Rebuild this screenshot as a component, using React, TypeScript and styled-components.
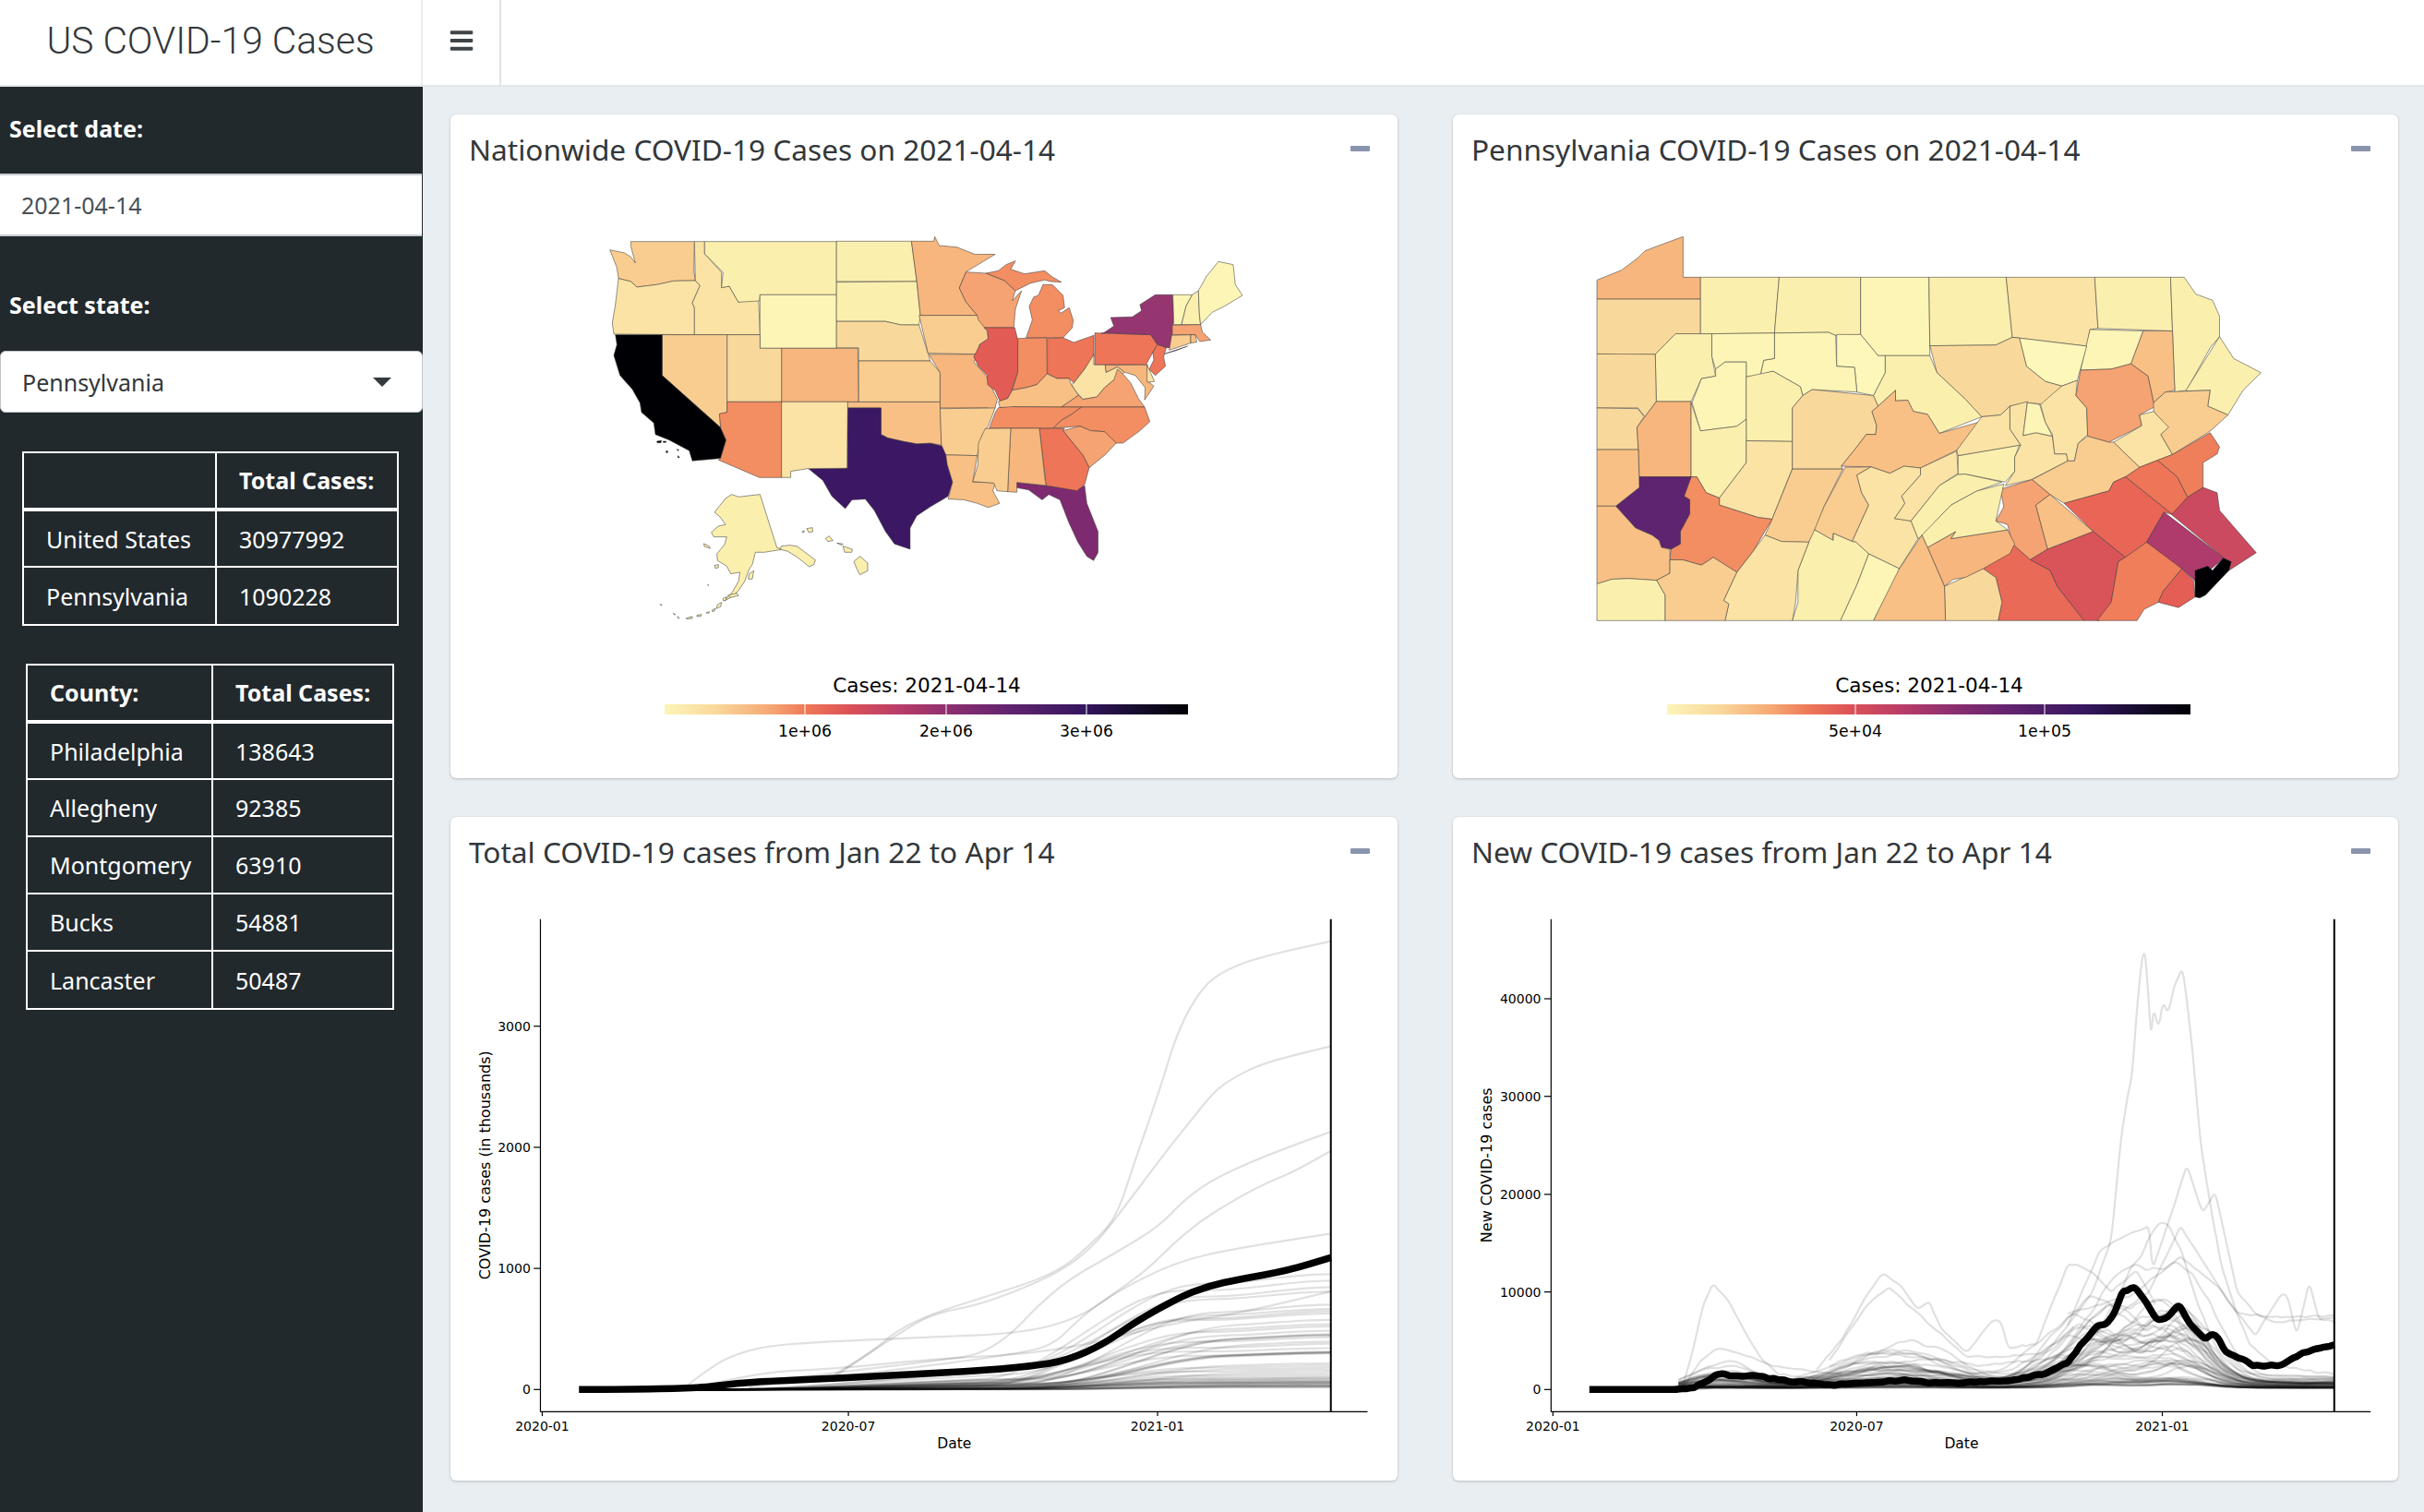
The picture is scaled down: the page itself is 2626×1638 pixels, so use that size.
import styled, { createGlobalStyle } from "styled-components";
import { FaBars } from "react-icons/fa";

const Y0 = "#fcf5b6";
const Y1 = "#fbefae";
const Y2 = "#fae3a4";
const Y3 = "#f9d99b";
const O0 = "#f9cd90";
const O1 = "#f8c085";
const O2 = "#f7b67d";
const O3 = "#f5a373";
const O4 = "#f38e62";
const O5 = "#ee7557";
const BLACK = "#000004";

type Shape = [string, string];

// traced from crops of the picture at 3x, this moves them into the 1568 x 1568 map box
const fromCrop = (ox: number, oy: number, shapes: Shape[]): Shape[] =>
  shapes.map(([fill, points]) => [
    fill,
    points
      .split(" ")
      .map((p) => {
        const [x, y] = p.split(",").map(Number);
        const u = (ox + x / 3 - 620) * 2.063;
        const v = (oy + y / 3 - 220) * 2.613;
        return `${u.toFixed(1)},${v.toFixed(1)}`;
      })
      .join(" "),
  ]);

const usCentral: Shape[] = [
  [Y1, "590,108 758,108 770,222 590,222"],
  [Y1, "590,224 770,222 778,318 775,345 735,345 700,335 590,335"],
  [Y3, "590,335 700,335 735,345 775,345 795,425 800,447 640,447 640,410 590,410"],
  [O0, "640,447 800,447 822,480 822,563 640,563"],
  [O1, "615,563 822,563 825,685 800,680 770,682 740,675 705,665 690,655 690,580 615,580"],
  ["#3c1763", "615,580 690,580 690,655 705,665 740,675 770,682 800,680 835,690 838,740 850,790 840,830 800,860 770,885 755,920 755,980 720,965 700,930 675,870 655,838 625,840 610,865 580,830 560,785 528,752 615,750"],
  [O2, "758,108 808,108 810,95 820,120 860,125 900,145 945,145 880,195 865,240 880,280 905,318 778,318 770,222"],
  [O0, "775,318 905,318 925,350 930,385 910,400 905,428 795,425 785,370"],
  [O2, "797,428 905,428 898,450 925,490 950,555 945,580 925,600 930,580 822,580 822,480"],
  [O0, "822,582 945,580 930,630 915,660 905,715 835,713 825,685"],
  [O1, "835,713 905,715 895,790 945,792 940,815 955,850 930,862 905,850 875,840 840,838 850,790 838,740"],
  ["#7e2a70", "990,790 1057,800 1128,812 1145,800 1150,850 1175,930 1175,990 1165,1012 1150,1000 1130,960 1110,905 1090,840 1065,825 1050,840 1020,812 990,805"],
];

const usEast: Shape[] = [
  [O3, "-10,164 55,168 115,192 150,225 140,258 170,225 150,285 145,345 50,345 30,320 26,305 -10,262 -32,216"],
  [O4, "55,168 95,160 120,140 150,128 135,155 180,170 245,160 270,180 300,197 265,195 245,190 200,200 170,215 150,225 115,192"],
  [O4, "185,378 205,320 195,275 210,245 225,240 240,205 270,205 305,240 310,280 290,290 298,298 325,280 338,320 335,345 305,378"],
  ["#e25c55", "48,345 148,345 158,385 158,490 135,560 125,575 100,585 85,550 60,530 58,500 30,470 15,440 35,400 62,380 60,355"],
  [O4, "158,380 252,378 253,495 220,530 185,540 140,548 158,490"],
  [O5, "254,380 305,378 340,393 405,370 405,440 375,480 340,525 325,510 285,510 254,495"],
  [Y2, "405,432 405,465 442,465 445,490 482,472 505,490 470,515 440,540 415,570 370,578 345,550 332,530 340,525 375,480"],
  [O1, "100,605 95,585 125,575 140,548 185,540 220,530 253,495 285,510 325,510 332,530 345,550 355,565 300,603 140,602 138,605"],
  [O3, "300,603 355,565 370,578 415,570 440,540 470,515 482,480 495,490 525,525 550,575 570,603"],
  [O2, "442,467 578,465 582,520 600,535 570,580 572,540 540,500 505,490 482,472 445,490"],
  [Y2, "578,465 602,520 578,522"],
  [O5, "408,362 590,368 612,400 597,425 575,465 408,465"],
  ["#963670", "432,365 470,340 460,312 530,310 560,290 555,270 605,238 662,238 665,310 655,410 640,410 612,400 590,368 430,362"],
  ["#7e2a70", "635,430 710,405 670,420"],
  [O5, "612,400 640,410 632,440 638,470 605,500 585,480 600,450 597,425"],
  [Y0, "662,238 725,238 705,275 690,335 665,335"],
  [Y1, "725,238 745,225 748,300 752,335 690,335 705,275"],
  [Y0, "745,225 770,180 810,130 858,140 865,205 888,240 830,275 790,295 752,335 748,300"],
  [O3, "660,337 752,335 758,360 785,385 750,390 735,368 660,368"],
  [O0, "658,370 720,368 720,395 650,418"],
  [O1, "720,368 735,368 740,392 720,395"],
  [O4, "365,603 570,603 587,650 555,680 500,720 475,720 440,683 395,680 360,665 272,672 300,645 330,628"],
  [O4, "140,602 300,603 365,603 330,628 300,645 272,672 65,672 85,620 95,605"],
  [O3, "305,680 360,665 395,680 440,683 478,720 440,760 390,800 370,760"],
  [O5, "228,673 310,672 305,680 370,760 390,800 375,855 350,875 250,858"],
  [O2, "135,672 228,672 247,842 250,858 155,848 155,880 125,878"],
  [O0, "52,673 135,672 125,878 90,875 80,850 12,845 28,790 30,720"],
];

const usWest: Shape[] = [
  [O0, "100,35 307,35 305,130 310,162 240,163 185,175 120,183 100,165 60,155 55,120 32,62 80,72 100,85 115,105 100,50"],
  [Y2, "60,155 100,165 120,183 185,175 240,163 310,162 325,178 300,235 307,250 307,338 45,336 40,300 50,240"],
  [Y2, "307,35 340,35 340,75 395,135 395,185 420,180 450,232 515,212 520,338 307,338 307,250 300,235 325,178 310,162"],
  [Y1, "340,35 768,35 768,208 520,208 518,228 450,232 420,180 395,185 400,135 340,75"],
  [Y0, "520,208 768,208 768,382 520,382"],
  [O2, "590,382 838,382 840,556 590,556"],
  [Y3, "413,338 520,338 520,382 590,382 590,556 413,556"],
  [O0, "202,338 413,338 413,590 390,595 392,640 202,470"],
  [BLACK, "50,338 202,338 202,470 392,640 410,680 392,740 300,748 290,715 225,680 180,662 175,625 135,590 130,560 105,515 65,470 45,405 55,370"],
  [BLACK, "185,684 200,682 198,689 186,689"],
  [BLACK, "205,684 215,684 214,688 206,688"],
  [BLACK, "215,716 220,716 220,721 215,721"],
  [BLACK, "250,710 256,712 254,716"],
  [BLACK, "252,731 259,736 254,738"],
  [O4, "413,556 590,556 590,802 518,802 385,745 392,740 410,680 392,640 388,595 413,590"],
  [Y2, "590,556 805,556 803,772 675,773 620,782 620,802 590,802"],
];

const usAlaska: Shape[] = [
  [Y1, "278,47 300,55 370,47 425,220 445,225 385,235 355,235 345,275 335,290 320,330 300,360 285,375 270,385 255,392 280,365 300,330 305,300 275,305 262,280 232,262 230,240 255,210 262,185 220,185 212,170 235,150 258,145 240,120 222,105 258,60"],
  [Y1, "465,212 490,215 550,260 545,275 530,282 490,250 460,232 435,225 440,215"],
  [Y1, "265,375 295,368 300,376 275,382"],
  [Y1, "250,385 262,380 258,392 250,392"],
  [Y1, "232,405 245,398 242,412 228,418"],
  [Y1, "215,422 225,418 222,426 215,428"],
  [Y1, "195,432 205,428 204,433"],
  [Y1, "165,440 180,437 178,443 165,444"],
  [Y1, "130,449 150,444 150,450 132,452"],
  [Y1, "45,404 50,405 50,409"],
  [Y1, "88,433 95,437 92,439"],
  [Y1, "102,443 108,449 104,450"],
  [Y1, "200,340 203,341 202,344"],
  [Y1, "187,207 205,215 208,222 190,217"],
  [Y1, "222,278 235,275 235,285 225,287"],
  [Y1, "335,305 350,295 345,322 332,322"],
  [Y1, "675,265 695,248 720,270 720,295 695,308 685,290"],
  [Y1, "620,205 640,208 636,212"],
  [Y1, "640,215 670,225 668,235 645,235"],
  [Y1, "583,190 595,182 607,197 590,200"],
  [Y1, "522,158 540,155 542,168 528,170"],
  [Y1, "507,168 515,165 510,172"],
];

const usStates: Shape[] = [
  ...usCentral,
  ...fromCrop(1050, 240, usEast),
  ...fromCrop(650, 250, usWest),
  ...fromCrop(700, 520, usAlaska),
];

const paCounties: Shape[] = [
  [O2, "98,218 150,190 185,155 200,135 240,115 281,95 281,210 318,210 318,272 98,272"],
  [Y3, "98,272 318,272 318,370 265,370 222,428 150,430 98,427"],
  [Y1, "318,210 485,210 475,368 342,370 318,370"],
  [Y1, "485,210 658,210 658,372 605,375 590,366 475,368"],
  [Y0, "658,210 803,210 805,432 695,432 658,372"],
  [Y1, "803,210 967,210 980,380 945,402 805,404"],
  [Y2, "967,210 1155,210 1162,355 1145,358 1138,405 980,380"],
  [Y1, "1155,210 1316,210 1320,362 1162,355"],
  [Y1, "1316,210 1345,210 1370,258 1405,275 1420,320 1420,378 1400,410 1350,530 1325,535"],
  [Y1, "1420,378 1450,440 1508,480 1470,530 1438,600 1395,575 1400,530 1348,532"],
  [Y0, "1145,358 1258,362 1232,455 1190,470 1125,473"],
  [O1, "1258,362 1320,362 1325,530 1305,535 1280,565 1268,490 1232,455"],
  ["#fdf7ba", "995,382 1138,405 1118,502 1085,518 1050,505 1010,462"],
  [Y3, "805,404 945,402 980,380 995,382 1010,462 1050,505 1085,518 1050,570 1010,565 975,575 955,600 915,605 880,555 820,480"],
  [Y1, "710,432 805,432 820,480 880,555 915,605 825,652 800,598 770,590 758,558 732,560 732,530 695,575 685,545 710,480"],
  ["#fdf7ba", "607,372 658,372 695,432 710,432 710,480 685,545 650,535 645,465 607,462"],
  [Y0, "475,368 590,366 605,375 607,462 645,465 650,535 555,528 535,545 530,520 472,476 445,487 452,445 475,440"],
  [Y0, "342,370 475,368 475,440 452,445 445,487 415,492 415,450 370,450 350,470 342,435"],
  [Y1, "265,370 342,370 342,435 350,490 320,497 298,562 224,562 222,428"],
  [Y3, "98,427 222,428 224,562 200,605 185,580 98,580"],
  [Y3, "98,580 185,582 198,605 183,635 186,698 98,698"],
  [O2, "224,562 298,562 298,775 188,775 186,698 183,635"],
  [Y0, "320,497 350,490 350,470 370,450 415,450 415,612 395,632 318,645 300,565"],
  [Y1, "415,492 472,476 530,520 535,545 513,580 513,675 415,673"],
  [Y1, "298,565 318,645 395,632 415,612 415,735 358,835 330,820 310,775 298,775"],
  [Y2, "415,673 513,675 513,752 470,895 440,890 358,855 358,835 415,735"],
  [Y3, "555,528 685,545 695,575 682,590 692,630 690,655 670,655 650,690 617,745 620,753 513,753 513,580 535,545"],
  [O1, "732,530 732,560 758,558 770,590 800,598 825,652 915,618 862,700 785,750 750,745 720,765 680,747 617,745 650,690 670,655 690,655 692,630 682,590 695,575"],
  [O0, "513,753 620,753 580,860 562,925 548,960 490,958 455,940 470,895"],
  [O0, "625,748 680,747 650,770 660,820 675,855 640,958 600,935 598,955 560,925 580,860"],
  [Y2, "680,747 720,765 750,745 785,750 785,770 745,830 752,850 730,893 765,900 780,950 740,1035 675,993 648,960 640,958 675,855 660,820 650,770"],
  [Y2, "785,750 862,702 865,765 825,800 765,900 730,893 752,850 745,830 785,770"],
  [Y1, "865,768 880,767 958,790 905,815 850,855 790,940 780,950 765,900 825,800"],
  [Y1, "865,715 995,685 985,720 985,760 965,790 880,767 865,768"],
  [Y2, "915,605 955,600 975,575 975,640 998,685 865,715 862,700"],
  [Y2, "975,575 1012,562 1003,658 1030,650 1065,660 1070,710 1095,710 1098,730 1020,783 965,800 985,760 985,720 998,685 975,640"],
  [Y0, "1012,565 1038,570 1050,620 1065,660 1030,650 1003,658"],
  [Y2, "1040,570 1085,518 1118,502 1115,545 1138,580 1140,655 1120,680 1112,730 1098,730 1095,710 1070,710 1065,655 1050,620"],
  [O3, "1125,473 1190,470 1232,455 1268,490 1280,565 1285,575 1250,600 1255,630 1185,677 1140,660 1138,580 1115,545"],
  [O0, "1280,565 1305,535 1400,530 1395,575 1438,600 1405,640 1395,650 1320,712 1295,655 1310,635 1280,590"],
  [Y2, "1250,600 1280,590 1312,635 1295,655 1320,712 1250,748 1195,677 1255,630"],
  ["#ef7f5a", "1320,712 1400,650 1420,690 1415,710 1385,735 1385,805 1352,833 1330,775 1288,728"],
  [O5, "1288,728 1330,775 1352,833 1320,882 1220,775 1250,748"],
  [O0, "1140,660 1185,677 1195,677 1250,748 1220,775 1195,790 1185,815 1090,850 1060,825 1022,783 1098,730 1112,730 1120,680"],
  [O3, "1022,783 1060,825 1030,855 1055,980 1018,1010 980,965 970,910 945,900 962,860 955,810"],
  [O1, "1060,825 1152,930 1055,980 1030,855"],
  ["#e96656", "1090,850 1185,815 1195,790 1220,775 1320,882 1302,875 1265,960 1220,1003 1152,930"],
  ["#d95459", "1018,1010 1055,980 1152,930 1220,1003 1205,1015 1190,1130 1165,1182 1132,1182 1075,1085 1060,1040"],
  ["#ea6a58", "918,1035 980,965 1018,1010 1060,1040 1075,1085 1132,1182 950,1182 958,1130 945,1060"],
  [Y3, "836,1085 918,1035 945,1060 958,1130 950,1182 838,1182"],
  [O2, "800,975 860,930 850,950 970,925 985,965 975,992 918,1035 880,1060 855,1065 836,1085"],
  [Y1, "788,940 850,855 905,815 962,795 945,900 970,925 850,950 860,930 800,975"],
  [O1, "788,940 800,975 836,1085 838,1182 685,1182 730,1055"],
  [Y0, "675,993 740,1035 685,1182 615,1182 650,1080"],
  [Y1, "560,925 600,955 600,935 640,958 648,960 675,993 650,1080 615,1182 513,1182 525,1130 525,1040 548,960"],
  [Y2, "455,940 490,958 548,960 525,1040 520,1130 513,1182 370,1182 378,1135 367,1125 395,1045 430,985"],
  [O4, "298,775 310,775 330,820 358,835 358,855 440,890 470,895 430,985 395,1045 345,1003 320,1025 280,1010 253,1010 255,980 275,965 275,930 295,880 295,840 283,830"],
  ["#5e2470", "188,775 298,775 283,830 295,840 295,880 275,930 275,965 255,980 235,975 230,955 215,940 180,920 138,858 188,805"],
  [O1, "98,698 186,698 188,805 138,858 98,858"],
  [O1, "98,858 138,858 180,920 215,940 230,955 235,975 253,980 253,1048 225,1068 165,1063 130,1065 98,1078"],
  [Y1, "98,1078 130,1065 165,1063 225,1068 243,1110 243,1182 98,1182"],
  [O0, "253,1010 280,1010 320,1025 345,1003 395,1045 367,1125 378,1135 370,1182 243,1182 243,1110 225,1068 253,1048"],
  ["#f07e5a", "1160,1182 1190,1130 1205,1015 1220,1003 1265,960 1302,985 1340,1035 1300,1100 1290,1130 1260,1150 1245,1182"],
  ["#e45e55", "1340,1035 1365,1070 1368,1115 1333,1145 1290,1130 1300,1100"],
  ["#ae3b6b", "1302,875 1430,1005 1398,1040 1368,1070 1340,1035 1265,960"],
  ["#cb4a5f", "1318,882 1352,833 1385,805 1415,820 1420,870 1498,990 1440,1040 1430,1005"],
  [BLACK, "1368,1040 1395,1028 1405,1040 1428,1005 1445,1015 1440,1040 1390,1110 1378,1118 1368,1115"],
];

type Pt = [number, number];

// small seeded generator so that the background lines stay the same
let seed = 20210414;
const rnd = () => {
  seed = (seed + 0x6d2b79f5) | 0;
  let t = Math.imul(seed ^ (seed >>> 15), 1 | seed);
  t = (t + Math.imul(t ^ (t >>> 7), 61 | t)) ^ t;
  return ((t ^ (t >>> 14)) >>> 0) / 4294967296;
};

const smoothStep = (a: number, b: number, x: number) => {
  const t = Math.min(1, Math.max(0, (x - a) / (b - a)));
  return t * t * (3 - 2 * t);
};
const bump = (c: number, w: number, x: number) => Math.exp(-((x - c) * (x - c)) / (2 * w * w));

const toPath = (pts: Pt[]) => {
  let d = `M${pts[0][0]},${pts[0][1]}`;
  for (let i = 1; i < pts.length - 1; i++) {
    const mx = (pts[i][0] + pts[i + 1][0]) / 2;
    const my = (pts[i][1] + pts[i + 1][1]) / 2;
    d += ` Q${pts[i][0]},${pts[i][1]} ${mx},${my}`;
  }
  const last = pts[pts.length - 1];
  return `${d} L${last[0]},${last[1]}`;
};

// daily numbers are noisy, so cut the traced line up and shake it a little
const jagged = (pts: Pt[], noise: number): Pt[] => {
  const out: Pt[] = [];
  for (let i = 0; i < pts.length - 1; i++) {
    const [x0, y0] = pts[i];
    const [x1, y1] = pts[i + 1];
    const steps = Math.max(1, Math.round((x1 - x0) / 8));
    for (let s = 0; s < steps; s++) {
      const f = s / steps;
      const flat = y0 > 1320 && y1 > 1320;
      out.push([x0 + (x1 - x0) * f, y0 + (y1 - y0) * f + (flat ? 0 : (rnd() - 0.5) * noise)]);
    }
  }
  out.push(pts[pts.length - 1]);
  return out;
};

const totalMain: Pt[][] = [
  [[640, 1290], [700, 1240], [740, 1190], [800, 1150], [880, 1115], [1000, 1060], [1060, 990], [1100, 930], [1130, 800], [1170, 640], [1200, 500], [1240, 400], [1280, 360], [1340, 330], [1450, 296]],
  [[640, 1295], [740, 1200], [800, 1150], [880, 1130], [1000, 1062], [1060, 1000], [1100, 930], [1180, 780], [1220, 710], [1260, 640], [1290, 610], [1340, 575], [1450, 537]],
  [[500, 1310], [800, 1260], [900, 1240], [1000, 1090], [1100, 1010], [1170, 950], [1210, 890], [1260, 840], [1340, 790], [1450, 733]],
  [[500, 1320], [800, 1270], [950, 1240], [1000, 1220], [1040, 1160], [1100, 1100], [1150, 1050], [1200, 980], [1250, 925], [1330, 860], [1390, 825], [1450, 777]],
  [[390, 1325], [440, 1270], [480, 1243], [530, 1225], [620, 1215], [800, 1205], [950, 1195], [1040, 1160], [1100, 1100], [1200, 1030], [1300, 1000], [1450, 967]],
  [[400, 1325], [510, 1285], [640, 1278], [800, 1255], [1000, 1240], [1200, 1170], [1300, 1150], [1450, 1100]],
];

const totalHighlight: Pt[] = [[222, 1325], [400, 1325], [480, 1310], [560, 1304], [660, 1298], [760, 1290], [860, 1283], [960, 1272], [1020, 1258], [1080, 1220], [1130, 1170], [1200, 1115], [1250, 1087], [1300, 1072], [1380, 1052], [1450, 1022]];

const totalEnds = [1060, 1075, 1090, 1100, 1130, 1140, 1145, 1150, 1165, 1175, 1180, 1190, 1198, 1200, 1200, 1205, 1215, 1220, 1230, 1238, 1240, 1240, 1240, 1242, 1265, 1270, 1275, 1280, 1285, 1290, 1295, 1298, 1300, 1302, 1305, 1306, 1308, 1308, 1310, 1310, 1312, 1314, 1315, 1316, 1317, 1318, 1319, 1320];

const totalLines: Pt[][] = [
  ...totalMain,
  ...totalEnds.map((end) => {
    const a = 1325 - end;
    const start = 880 + rnd() * 120;
    const early = 0.05 + rnd() * 0.15;
    const pts: Pt[] = [];
    for (let x = 400; x <= 1450; x += 35) {
      const g = early * smoothStep(450, 1000, x) + (1 - early) * (0.9 * smoothStep(start, start + 320, x) + 0.1 * smoothStep(1250, 1450, x));
      pts.push([x, 1325 - a * g]);
    }
    return pts;
  }),
];

const newMain: Pt[][] = [
  [[380, 1325], [900, 1300], [960, 1250], [1000, 1180], [1040, 1100], [1070, 980], [1085, 750], [1097, 640], [1103, 605], [1112, 420], [1122, 295], [1128, 400], [1133, 520], [1137, 445], [1145, 500], [1152, 430], [1160, 465], [1170, 400], [1183, 355], [1190, 430], [1200, 560], [1212, 760], [1225, 880], [1245, 1040], [1270, 1150], [1290, 1220], [1330, 1270], [1425, 1290]],
  [[385, 1325], [400, 1250], [420, 1130], [435, 1082], [460, 1120], [485, 1190], [510, 1250], [540, 1290], [600, 1300], [800, 1310]],
  [[385, 1325], [415, 1260], [440, 1230], [490, 1248], [530, 1270], [580, 1280], [640, 1290]],
  [[600, 1280], [640, 1210], [680, 1110], [705, 1058], [735, 1085], [760, 1140], [780, 1125], [800, 1190], [840, 1240], [880, 1165], [895, 1170], [905, 1230], [950, 1220], [1000, 1040], [1015, 1040], [1040, 1055], [1070, 1100], [1110, 1050], [1140, 1130]],
  [[620, 1260], [680, 1130], [715, 1090], [760, 1150], [800, 1200], [840, 1250], [900, 1250], [960, 1240], [1010, 1180]],
  [[1000, 1180], [1050, 1010], [1080, 980], [1130, 950], [1135, 1050], [1170, 900], [1190, 810], [1215, 920], [1235, 870], [1250, 970], [1270, 1100], [1300, 1150], [1330, 1170], [1425, 1160]],
  [[1040, 1200], [1130, 1100], [1180, 950], [1220, 1040], [1260, 1130], [1300, 1200], [1340, 1105], [1350, 1105], [1365, 1200], [1385, 1080], [1400, 1160], [1425, 1170]],
  [[1000, 1150], [1100, 1110], [1180, 1020], [1240, 1090], [1270, 1150], [1340, 1160], [1425, 1155]],
  [[620, 1270], [680, 1240], [760, 1250], [860, 1270], [1000, 1250]],
].map((pts) => jagged(pts as Pt[], 5));

const newHighlight: Pt[] = jagged(
  [[238, 1325], [385, 1325], [405, 1320], [425, 1305], [445, 1288], [470, 1295], [500, 1293], [540, 1303], [630, 1315], [700, 1307], [740, 1303], [770, 1308], [820, 1311], [860, 1307], [900, 1305], [960, 1290], [1000, 1265], [1020, 1225], [1045, 1182], [1065, 1172], [1075, 1150], [1088, 1100], [1108, 1090], [1125, 1125], [1142, 1165], [1160, 1160], [1178, 1130], [1195, 1175], [1220, 1212], [1230, 1198], [1240, 1205], [1250, 1238], [1265, 1245], [1295, 1270], [1340, 1268], [1375, 1240], [1425, 1222]],
  5,
);

const newLines: Pt[][] = [
  ...newMain,
  ...Array.from({ length: 52 }, () => {
    const a = 12 + Math.pow(rnd(), 2) * 200;
    const r1 = rnd() * 0.3;
    const r2 = rnd() * 0.5;
    const r3 = 0.5 + rnd() * 0.6;
    const c3 = 1010 + rnd() * 90;
    const c4 = 1160 + rnd() * 40;
    let wander = 1;
    const pts: Pt[] = [];
    for (let x = 380; x <= 1425; x += 9) {
      wander = Math.min(1.5, Math.max(0.6, wander + (rnd() - 0.5) * 0.16));
      const g = r1 * bump(450, 50, x) + r2 * bump(720, 80, x) + r3 * bump(c3, 60, x) + 0.8 * bump(c4, 45, x) + 0.1 * smoothStep(400, 800, x);
      pts.push([x, 1322 - a * g * wander]);
    }
    return pts;
  }),
];

const GlobalStyle = createGlobalStyle`
  html, body {
    margin: 0;
    padding: 0;
    background: #e9eef2;
  }
  * {
    box-sizing: border-box;
  }
`;

const Page = styled.div`
  width: 2626px;
  min-height: 1638px;
  display: flex;
  flex-direction: column;
  font-family: "Noto Sans", "Open Sans", sans-serif;
`;
const Header = styled.header`
  height: 94px;
  display: flex;
  background: #fff;
  border-bottom: 2px solid #e3e6ea;
`;
const Logo = styled.div`
  width: 458px;
  padding-bottom: 5px;
  display: flex;
  align-items: center;
  justify-content: center;
  font-family: Roboto, "Liberation Sans", sans-serif;
  font-weight: 300;
  font-size: 40.8px;
  color: #33373a;
  border-right: 2px solid #eceef0;
`;
const Toggle = styled.div`
  width: 85px;
  padding-bottom: 4px;
  display: flex;
  align-items: center;
  justify-content: center;
  font-size: 28px;
  color: #3f4448;
  border-right: 2px solid #dfe3e7;
`;
const Body = styled.div`
  flex: 1;
  display: flex;
`;
const Sidebar = styled.aside`
  width: 458px;
  background: #21292d;
  padding-top: 25px;
  display: flex;
  flex-direction: column;
`;
const FieldLabel = styled.div<{ $gap?: number }>`
  height: 40px;
  line-height: 40px;
  padding-left: 10px;
  margin-top: ${(p) => p.$gap ?? 0}px;
  margin-bottom: ${(p) => (p.$gap ? 30 : 29)}px;
  font-size: 25px;
  font-weight: 700;
  color: #fff;
`;
const DateField = styled.div`
  height: 68px;
  margin-right: 1px;
  padding-left: 23px;
  display: flex;
  align-items: center;
  background: #fff;
  border-top: 2px solid #c9ced4;
  border-bottom: 2px solid #c9ced4;
  font-size: 25px;
  color: #495057;
`;
const SelectField = styled.div`
  height: 67px;
  padding: 0 33px 0 23px;
  display: flex;
  align-items: center;
  justify-content: space-between;
  background: #fff;
  border: 1px solid #c0c4c8;
  border-radius: 6px;
  font-size: 25px;
  color: #33373a;
`;
const Caret = styled.span`
  width: 0;
  height: 0;
  border-left: 10px solid transparent;
  border-right: 10px solid transparent;
  border-top: 10px solid #343a40;
`;
const SideTable = styled.table<{ $left: number; $top: number; $first: number; $second: number }>`
  width: ${(p) => p.$first + p.$second}px;
  margin: ${(p) => p.$top}px 0 0 ${(p) => p.$left}px;
  border-collapse: collapse;
  table-layout: fixed;
  color: #fff;
  font-size: 25px;
  th,
  td {
    height: 62px;
    padding: 0 0 0 24px;
    border: 2px solid #fff;
    text-align: left;
    font-weight: 400;
  }
  th {
    height: 62px;
    padding-bottom: 2px;
    font-weight: 700;
    border-bottom-width: 4px;
  }
  tbody tr:last-child td {
    height: 63px;
  }
  th:first-child,
  td:first-child {
    width: ${(p) => p.$first}px;
  }
`;
const Main = styled.main`
  flex: 1;
  padding: 30px 28px 34px 30px;
  display: grid;
  grid-template-columns: 1026px 1024px;
  grid-template-rows: 719px 719px;
  column-gap: 60px;
  row-gap: 42px;
`;
const Card = styled.section`
  background: #fff;
  border-radius: 6px;
  box-shadow: 0 0 1px rgba(0, 0, 0, 0.125), 0 1px 3px rgba(0, 0, 0, 0.2);
  display: flex;
  flex-direction: column;
  overflow: hidden;
`;
const CardHeader = styled.div`
  height: 76px;
  padding: 0 30px 2px 20px;
  display: flex;
  align-items: center;
  justify-content: space-between;
`;
const CardTitle = styled.h3`
  margin: 0;
  font-size: 31.6px;
  font-weight: 400;
  color: #33373a;
`;
const Collapse = styled.span`
  width: 21px;
  height: 6px;
  border-radius: 1px;
  background: #8a94ad;
`;
const PlotSvg = styled.svg`
  display: block;
  width: 100%;
  flex: 1;
`;
const PlotText = styled.text<{ $size: number }>`
  font-family: "DejaVu Sans", sans-serif;
  font-size: ${(p) => p.$size}px;
  fill: #000;
  dominant-baseline: central;
`;
const Border = styled.polygon`
  stroke: #3a3a3a;
  stroke-opacity: 0.6;
  stroke-width: 0.9;
  vector-effect: non-scaling-stroke;
`;
const Spine = styled.line<{ $width?: number }>`
  stroke: #000;
  stroke-width: ${(p) => p.$width ?? 1.2};
  vector-effect: non-scaling-stroke;
`;
const TraceLine = styled.path`
  fill: none;
  stroke: #000;
  stroke-opacity: 0.12;
  stroke-width: 2.2;
  stroke-linejoin: round;
  vector-effect: non-scaling-stroke;
`;
const HighlightLine = styled.path`
  fill: none;
  stroke: #000;
  stroke-width: 7.5;
  stroke-linejoin: round;
  vector-effect: non-scaling-stroke;
`;

const gradientStops: [number, string][] = [
  [0, "#fcf5b6"],
  [0.1, "#f9d79a"],
  [0.2, "#f6a874"],
  [0.27, "#ee7857"],
  [0.35, "#dd5257"],
  [0.45, "#b83c68"],
  [0.54, "#8e2f6f"],
  [0.65, "#64246f"],
  [0.8, "#35165f"],
  [0.9, "#170c2e"],
  [1, "#000004"],
];

interface MapPlotProps {
  id: string;
  x: number;
  width: number;
  shapes: Shape[];
  titleX: number;
  barFrom: number;
  barTo: number;
  ticks: [number, string][];
}

// the map is drawn stretched into a 1568 box, text stays outside of it
function MapPlot({ id, x, width, shapes, titleX, barFrom, barTo, ticks }: MapPlotProps) {
  return (
    <PlotSvg>
      <defs>
        <linearGradient id={id}>
          {gradientStops.map(([o, c]) => (
            <stop key={o} offset={o} stopColor={c} />
          ))}
        </linearGradient>
      </defs>
      <svg x={x} y={20} width={width} height={600} viewBox="0 0 1568 1568" preserveAspectRatio="none">
        {shapes.map(([fill, points], i) => (
          <Border key={i} fill={fill} points={points} />
        ))}
      </svg>
      <PlotText $size={21.6} x={titleX} y={542} textAnchor="middle">
        Cases: 2021-04-14
      </PlotText>
      <rect x={barFrom} y={563} width={barTo - barFrom} height={11} fill={`url(#${id})`} />
      {ticks.map(([tx, label]) => (
        <g key={label}>
          <line x1={tx} x2={tx} y1={563} y2={574} stroke="#fff" strokeWidth={1} />
          <PlotText $size={17.3} x={tx} y={592} textAnchor="middle">
            {label}
          </PlotText>
        </g>
      ))}
    </PlotSvg>
  );
}

interface ChartPlotProps {
  x: number;
  width: number;
  spineX: number;
  spineEnd: number;
  lastX: number;
  lines: Pt[][];
  highlight: Pt[];
  yTicks: [number, string][];
  xTicks: [number, string][];
  yLabel: string;
  yLabelX: number;
  dateX: number;
}

function ChartPlot({ x, width, spineX, spineEnd, lastX, lines, highlight, yTicks, xTicks, yLabel, yLabelX, dateX }: ChartPlotProps) {
  const sx = width / 1568;
  const sy = 740 / 1568;
  const top = -81;
  return (
    <PlotSvg>
      <svg x={x} y={top} width={width} height={740} viewBox="0 0 1568 1568" preserveAspectRatio="none">
        {lines.map((pts, i) => (
          <TraceLine key={i} d={toPath(pts)} />
        ))}
        <HighlightLine d={toPath(highlight)} />
        <Spine x1={spineX} x2={spineX} y1={245} y2={1376} />
        <Spine x1={spineX} x2={spineEnd} y1={1376} y2={1376} />
        <Spine $width={2} x1={lastX} x2={lastX} y1={245} y2={1376} />
        {yTicks.map(([ty]) => (
          <Spine key={ty} x1={spineX - 11} x2={spineX} y1={ty} y2={ty} />
        ))}
        {xTicks.map(([tx]) => (
          <Spine key={tx} x1={tx} x2={tx} y1={1376} y2={1386} />
        ))}
      </svg>
      {yTicks.map(([ty, label]) => (
        <PlotText key={label} $size={14} x={x + (spineX - 16) * sx} y={top + ty * sy} textAnchor="end">
          {label}
        </PlotText>
      ))}
      {xTicks.map(([tx, label]) => (
        <PlotText key={label} $size={14} x={x + tx * sx} y={top + 1410 * sy} textAnchor="middle">
          {label}
        </PlotText>
      ))}
      <PlotText $size={15.5} x={x + dateX * sx} y={top + 1450 * sy} textAnchor="middle">
        Date
      </PlotText>
      <PlotText
        $size={16}
        textAnchor="middle"
        transform={`translate(${x + yLabelX * sx} ${top + 810 * sy}) rotate(-90)`}
      >
        {yLabel}
      </PlotText>
    </PlotSvg>
  );
}

function App() {
  return (
    <Page>
      <GlobalStyle />
      <Header>
        <Logo>US COVID-19 Cases</Logo>
        <Toggle>
          <FaBars />
        </Toggle>
      </Header>
      <Body>
        <Sidebar>
          <FieldLabel>Select date:</FieldLabel>
          <DateField>2021-04-14</DateField>
          <FieldLabel $gap={54}>Select state:</FieldLabel>
          <SelectField>
            Pennsylvania
            <Caret />
          </SelectField>
          <SideTable $left={24} $top={42} $first={209} $second={199}>
            <thead>
              <tr>
                <th />
                <th>Total Cases:</th>
              </tr>
            </thead>
            <tbody>
              <tr>
                <td>United States</td>
                <td>30977992</td>
              </tr>
              <tr>
                <td>Pennsylvania</td>
                <td>1090228</td>
              </tr>
            </tbody>
          </SideTable>
          <SideTable $left={28} $top={41} $first={201} $second={198}>
            <thead>
              <tr>
                <th>County:</th>
                <th>Total Cases:</th>
              </tr>
            </thead>
            <tbody>
              <tr>
                <td>Philadelphia</td>
                <td>138643</td>
              </tr>
              <tr>
                <td>Allegheny</td>
                <td>92385</td>
              </tr>
              <tr>
                <td>Montgomery</td>
                <td>63910</td>
              </tr>
              <tr>
                <td>Bucks</td>
                <td>54881</td>
              </tr>
              <tr>
                <td>Lancaster</td>
                <td>50487</td>
              </tr>
            </tbody>
          </SideTable>
        </Sidebar>
        <Main>
          <Card>
            <CardHeader>
              <CardTitle>Nationwide COVID-19 Cases on 2021-04-14</CardTitle>
              <Collapse />
            </CardHeader>
            <MapPlot
              id="usBar"
              x={132}
              width={760}
              shapes={usStates}
              titleX={516}
              barFrom={232}
              barTo={799}
              ticks={[
                [384, "1e+06"],
                [537, "2e+06"],
                [689, "3e+06"],
              ]}
            />
          </Card>
          <Card>
            <CardHeader>
              <CardTitle>Pennsylvania COVID-19 Cases on 2021-04-14</CardTitle>
              <Collapse />
            </CardHeader>
            <MapPlot
              id="paBar"
              x={106}
              width={800}
              shapes={paCounties}
              titleX={516}
              barFrom={232}
              barTo={799}
              ticks={[
                [436, "5e+04"],
                [641, "1e+05"],
              ]}
            />
          </Card>
          <Card>
            <CardHeader>
              <CardTitle>Total COVID-19 cases from Jan 22 to Apr 14</CardTitle>
              <Collapse />
            </CardHeader>
            <ChartPlot
              x={-8}
              width={1040}
              spineX={159}
              spineEnd={1510}
              lastX={1450}
              lines={totalLines}
              highlight={totalHighlight}
              yTicks={[
                [1325, "0"],
                [1047, "1000"],
                [769, "2000"],
                [491, "3000"],
              ]}
              xTicks={[
                [162, "2020-01"],
                [662, "2020-07"],
                [1167, "2021-01"],
              ]}
              yLabel="COVID-19 cases (in thousands)"
              yLabelX={68}
              dateX={835}
            />
          </Card>
          <Card>
            <CardHeader>
              <CardTitle>New COVID-19 cases from Jan 22 to Apr 14</CardTitle>
              <Collapse />
            </CardHeader>
            <ChartPlot
              x={-14}
              width={1066}
              spineX={177}
              spineEnd={1483}
              lastX={1425}
              lines={newLines}
              highlight={newHighlight}
              yTicks={[
                [1325, "0"],
                [1101, "10000"],
                [877, "20000"],
                [652, "30000"],
                [428, "40000"],
              ]}
              xTicks={[
                [180, "2020-01"],
                [664, "2020-07"],
                [1151, "2021-01"],
              ]}
              yLabel="New COVID-19 cases"
              yLabelX={75}
              dateX={831}
            />
          </Card>
        </Main>
      </Body>
    </Page>
  );
}

export default App;
